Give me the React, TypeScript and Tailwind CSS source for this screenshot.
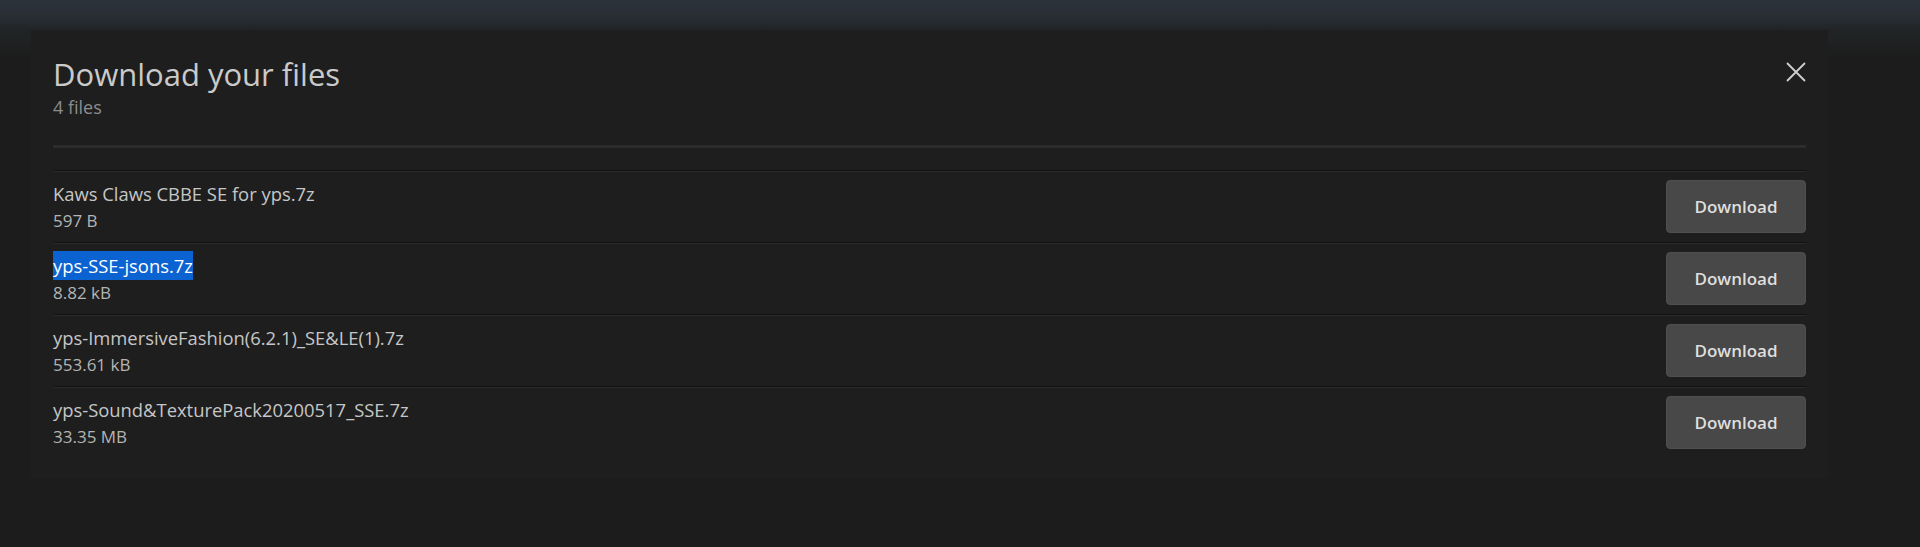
import React from 'react'

const files = [
  { name: 'Kaws Claws CBBE SE for yps.7z', size: '597 B' },
  { name: 'yps-SSE-jsons.7z', size: '8.82 kB', selected: true },
  { name: 'yps-ImmersiveFashion(6.2.1)_SE&LE(1).7z', size: '553.61 kB' },
  { name: 'yps-Sound&TexturePack20200517_SSE.7z', size: '33.35 MB' },
]

function CloseIcon() {
  return (
    <svg width="20" height="20" viewBox="0 0 20 20" fill="none">
      <path d="M1 1L19 19M19 1L1 19" stroke="#cfcfcf" strokeWidth="1.8" />
    </svg>
  )
}

export default function App() {
  return (
    <div
      className="h-[547px] w-full overflow-hidden bg-[#1b1b1b] bg-[linear-gradient(to_bottom,#2b333b_0px,#272d33_18px,#212426_30px,#1c1c1c_60px)]"
      style={{ fontFamily: '"Open Sans", "Noto Sans", sans-serif' }}
    >
      <div className="pt-[30px] pl-[31px]">
        {/* Modal */}
        <div className="w-[1797px] h-[448px] bg-[#1e1e1e] px-[22px] pt-[24px]">
          <div className="flex items-start justify-between">
            <div>
              <h1 className="text-[31px] leading-[40px] text-[#cacaca] font-normal">Download your files</h1>
              <p className="mt-[1px] text-[18px] leading-[24px] text-[#8c8c8c]">4 files</p>
            </div>
            <button className="mt-[8px]">
              <CloseIcon />
            </button>
          </div>

          <div className="mt-[26px] h-[3px] bg-[#2c2c2c]" />

          <div className="mt-[22px]">
            {files.map((f) => (
              <div
                key={f.name}
                className="flex items-center justify-between border-t border-[#121212] shadow-[inset_0_1px_0_#2b2b2b] pt-[9px] pb-[9px]"
              >
                <div>
                  <div className="text-[18.4px] leading-[25px] text-[#c6c6c6]">
                    {f.selected ? (
                      <span className="bg-[#0b63d2] text-white py-[2px]">{f.name}</span>
                    ) : (
                      f.name
                    )}
                  </div>
                  <div className="mt-[2px] text-[17px] leading-[25px] text-[#b4b4b4]">{f.size}</div>
                </div>
                <button className="w-[140px] h-[53px] rounded-[4px] bg-[#484848] border border-[#4f4f4f] text-[17px] font-semibold text-[#dedede]">
                  Download
                </button>
              </div>
            ))}
          </div>
        </div>
      </div>
    </div>
  )
}
